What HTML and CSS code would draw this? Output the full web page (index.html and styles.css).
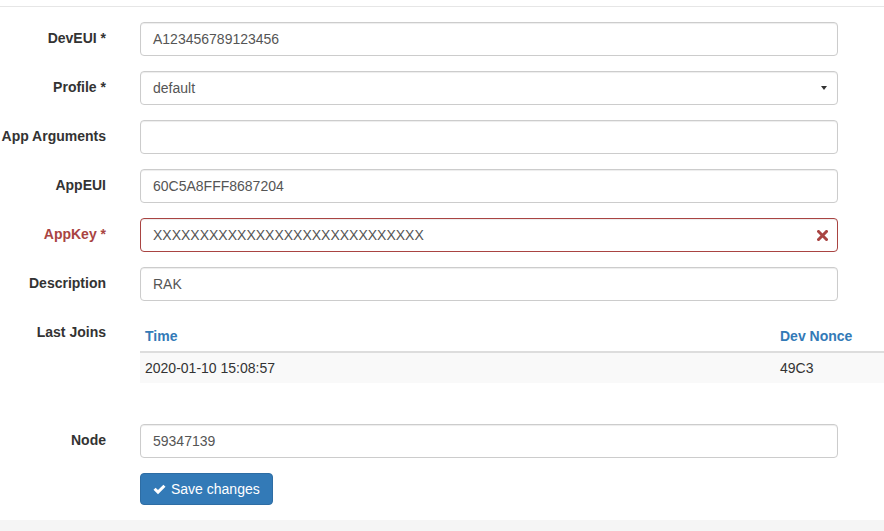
FILE: index.html
```html
<!DOCTYPE html>
<html>
<head>
<meta charset="utf-8">
<link rel="stylesheet" href="styles.css">
</head>
<body>
<div class="page">
  <div class="top-rule"></div>
  <form class="form">
    <div class="row">
      <label class="lbl">DevEUI *</label>
      <div class="ctl"><div class="input">A123456789123456</div></div>
    </div>
    <div class="row">
      <label class="lbl">Profile *</label>
      <div class="ctl">
        <div class="input select">default
          <svg class="caret" width="8" height="4" viewBox="0 0 8 4"><path d="M1 0H7L4 4Z" fill="#333"/></svg>
        </div>
      </div>
    </div>
    <div class="row">
      <label class="lbl">App Arguments</label>
      <div class="ctl"><div class="input"></div></div>
    </div>
    <div class="row">
      <label class="lbl">AppEUI</label>
      <div class="ctl"><div class="input">60C5A8FFF8687204</div></div>
    </div>
    <div class="row error">
      <label class="lbl">AppKey *</label>
      <div class="ctl">
        <div class="input">XXXXXXXXXXXXXXXXXXXXXXXXXXXXX
          <svg class="xicon" width="11" height="11" viewBox="0 0 11 11"><path d="M1.5 1.5L9.5 9.5M9.5 1.5L1.5 9.5" stroke="#a94442" stroke-width="3" stroke-linecap="square"/></svg>
        </div>
      </div>
    </div>
    <div class="row">
      <label class="lbl">Description</label>
      <div class="ctl"><div class="input">RAK</div></div>
    </div>
    <div class="row joins">
      <label class="lbl">Last Joins</label>
      <div class="ctl">
        <table class="table">
          <thead>
            <tr><th class="c-time">Time</th><th class="c-nonce">Dev Nonce</th></tr>
          </thead>
          <tbody>
            <tr><td>2020-01-10 15:08:57</td><td>49C3</td></tr>
          </tbody>
        </table>
      </div>
    </div>
    <div class="row">
      <label class="lbl">Node</label>
      <div class="ctl"><div class="input">59347139</div></div>
    </div>
    <div class="row">
      <div></div>
      <div class="ctl">
        <button type="button" class="btn">
          <svg class="check" width="13" height="11" viewBox="0 0 13 11"><path d="M0.5 5.8L2.6 3.7L5 6.1L10.4 0.7L12.5 2.8L5 10.3Z" fill="#fff"/></svg>
          Save changes
        </button>
      </div>
    </div>
  </form>
  <div class="footer"></div>
</div>
</body>
</html>
```
FILE: styles.css
```css
html, body {
  margin: 0;
  padding: 0;
  background: #fff;
}
body {
  font-family: "Liberation Sans", Arial, sans-serif;
  font-size: 14px;
  line-height: 20px;
  color: #333;
  overflow: hidden;
}
.page {
  width: 884px;
  height: 531px;
  display: flex;
  flex-direction: column;
  overflow: hidden;
}
.top-rule {
  margin-top: 6px;
  height: 0;
  border-top: 1px solid #e6e6e6;
}
.form {
  padding-top: 15px;
  margin: 0;
}
.row {
  display: grid;
  grid-template-columns: 106px 698px;
  column-gap: 34px;
  margin-bottom: 15px;
}
.lbl {
  font-weight: bold;
  text-align: right;
  padding-top: 6px;
  white-space: nowrap;
  color: #333;
}
.input {
  position: relative;
  box-sizing: border-box;
  height: 34px;
  padding: 6px 12px;
  border: 1px solid #ccc;
  border-radius: 4px;
  color: #555;
  background: #fff;
  box-shadow: inset 0 1px 1px rgba(0,0,0,.075);
  white-space: nowrap;
}
.caret {
  position: absolute;
  right: 9px;
  top: 14px;
}
.error .lbl {
  color: #a94442;
}
.error .input {
  border-color: #a94442;
}
.xicon {
  position: absolute;
  right: 9px;
  top: 11px;
}
.joins .ctl {
  min-width: 0;
}
.table {
  width: 744px;
  border-collapse: collapse;
  margin-top: 5px;
  margin-bottom: 26px;
}
.table th {
  text-align: left;
  font-weight: bold;
  color: #337ab7;
  padding: 5px;
  border-bottom: 2px solid #ddd;
}
.table td {
  padding: 5px;
  background: #f9f9f9;
  color: #333;
}
.c-time {
  width: 625px;
}
.btn {
  display: inline-flex;
  align-items: center;
  gap: 5px;
  box-sizing: border-box;
  height: 32px;
  padding: 5px 12px;
  font-family: "Liberation Sans", Arial, sans-serif;
  font-size: 14px;
  line-height: 20px;
  color: #fff;
  background: #337ab7;
  border: 1px solid #2e6da4;
  border-radius: 4px;
}
.footer {
  flex: 1;
  background: #f5f5f5;
}
```
